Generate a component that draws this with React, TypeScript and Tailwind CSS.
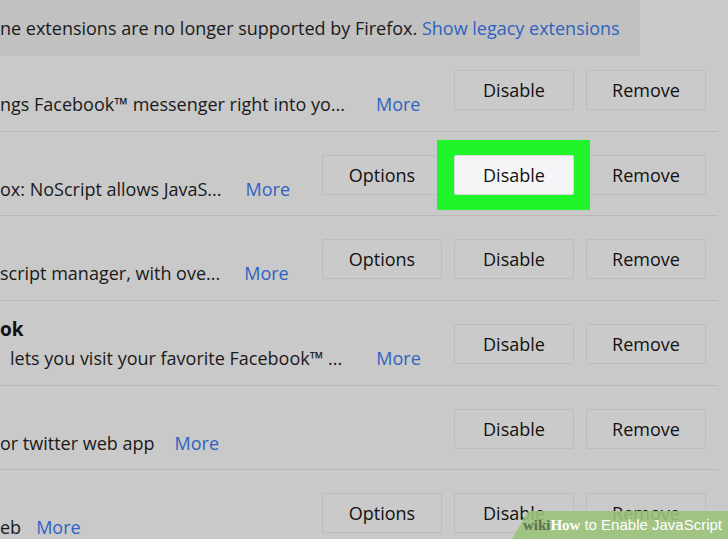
import React from "react";

type Row = {
  title?: string;
  desc: string;
  moreGap: number;
  lead?: number;
  options?: boolean;
  highlight?: boolean;
  h: number;
  shift?: number;
};

const rows: Row[] = [
  { desc: "ngs Facebook™ messenger right into yo...", moreGap: 31, h: 76, shift: -9 },
  { desc: "ox: NoScript allows JavaS...", moreGap: 24, options: true, highlight: true, h: 84 },
  { desc: "script manager, with ove...", moreGap: 24, options: true, h: 85 },
  { title: "ok", desc: "lets you visit your favorite Facebook™ ...", moreGap: 34, lead: 10, h: 85 },
  { desc: "or twitter web app", moreGap: 20, h: 84 },
  { desc: "eb", moreGap: 15, options: true, h: 85 },
];

function Btn({ label, lit }: { label: string; lit?: boolean }) {
  const btn = (
    <div
      className={
        "flex h-[40px] w-[120px] items-center justify-center rounded-[2px] border text-[18px] text-[#111] " +
        (lit ? "border-[#d8d8dc] bg-[#f5f5f7]" : "border-[#bcbcbc] bg-[#cacaca]")
      }
    >
      {label}
    </div>
  );
  if (!lit) return btn;
  return (
    <div className="relative">
      {/* green callout from the tutorial */}
      <div className="absolute -left-[17px] -right-[16px] -top-[15px] -bottom-[15px] bg-[#20f52a]" />
      <div className="relative">{btn}</div>
    </div>
  );
}

function ExtRow({ row }: { row: Row }) {
  const shift = row.shift ?? 0;
  return (
    <div
      className="flex w-[718px] items-start border-b border-[#b7b7b7]"
      style={{ height: row.h }}
    >
      <div className="flex-1 min-w-0" style={{ paddingTop: 15 + shift }}>
        <div className="h-[26px] text-[19px] font-bold leading-[26px] text-[#111]">
          {row.title ?? ""}
        </div>
        <div
          className="flex h-[32px] items-center whitespace-nowrap text-[18px] leading-[32px] text-[#1a1a1a]"
          style={{ paddingLeft: row.lead ?? 0 }}
        >
          <span>{row.desc}</span>
          <span className="text-[#2f63c0]" style={{ marginLeft: row.moreGap }}>
            More
          </span>
        </div>
      </div>
      <div className="flex gap-[12px] pr-[12px]" style={{ paddingTop: 23 + shift }}>
        {row.options && <Btn label="Options" />}
        <Btn label="Disable" lit={row.highlight} />
        <Btn label="Remove" />
      </div>
    </div>
  );
}

export default function App() {
  return (
    <div
      className="relative h-[539px] w-[728px] overflow-hidden bg-[#c9c9c9]"
      style={{ fontFamily: '"Open Sans", "Noto Sans", sans-serif' }}
    >
      <div className="flex h-[56px] w-[640px] items-center rounded-br-[2px] border-b border-r border-[#bdbdbd] bg-[#c1c1c1] pt-[2px] text-[18px] text-[#1a1a1a]">
        <span className="whitespace-nowrap">
          ne extensions are no longer supported by Firefox.{" "}
          <span className="text-[#2f63c0]">Show legacy extensions</span>
        </span>
      </div>

      <div className="flex flex-col">
        {rows.map((r, i) => (
          <ExtRow key={i} row={r} />
        ))}
      </div>

      {/* wikiHow watermark */}
      <div className="absolute bottom-0 right-0 h-[28px] w-[232px] overflow-hidden">
        <div className="absolute inset-y-0 left-[16px] right-0 origin-bottom-left skew-x-[-30deg] bg-[#9cc27c]/90" />
        <div className="relative flex h-full items-center justify-end gap-[4px] pr-[6px] text-[15px] text-white">
          <span className="font-bold" style={{ fontFamily: '"Liberation Serif", serif' }}>
            <span className="text-[#5f7150]">wiki</span>How
          </span>
          <span style={{ fontFamily: '"Liberation Sans", sans-serif' }}>to Enable JavaScript</span>
        </div>
      </div>
    </div>
  );
}
